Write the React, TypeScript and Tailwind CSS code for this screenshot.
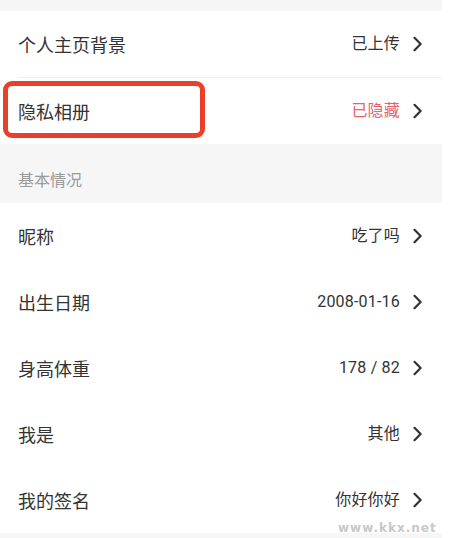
import React from "react";

const font = { fontFamily: '"Noto Sans CJK SC", "Noto Sans", sans-serif' };
const valueFont = { fontFamily: 'Roboto, "Noto Sans CJK SC", sans-serif' };

function Chevron() {
  return (
    <svg width="9" height="16" viewBox="0 0 9 16" className="shrink-0">
      <path d="M1.5 1.8 L7.6 8 L1.5 14.2" fill="none" stroke="#333" strokeWidth="2.2" strokeLinecap="round" strokeLinejoin="round" />
    </svg>
  );
}

function Row({ title, value, red, children }: { title: string; value: string; red?: boolean; children?: React.ReactNode }) {
  return (
    <div className="relative flex h-[66px] items-center justify-between bg-white pl-[18px] pr-[20px]">
      <span className="text-[18px] leading-none text-[#333]">{title}</span>
      <div className="flex items-center gap-[13px]">
        <span className={"text-[16px] leading-none tracking-[0.2px] " + (red ? "text-[#e8626a]" : "text-[#333]")} style={valueFont}>{value}</span>
        <Chevron />
      </div>
      {children}
    </div>
  );
}

export default function App() {
  return (
    <div className="relative h-[538px] w-[452px] overflow-hidden bg-white" style={font}>
      <div className="flex h-full w-[442px] flex-col bg-[#f6f6f6]">
        <div className="h-[11px] shrink-0" />
        <Row title="个人主页背景" value="已上传" />
        <div className="flex h-px bg-white pl-[18px]">
          <div className="h-px flex-1 bg-[#efefef]" />
        </div>
        <Row title="隐私相册" value="已隐藏" red>
          <div className="absolute left-[3px] top-[3px] h-[57px] w-[202px] rounded-[9px] border-[5px] border-[#e9402a]" />
        </Row>
        <div className="h-[59px] shrink-0 pl-[18px] pt-[27px] text-[16px] leading-none text-[#9a9a9a]">基本情况</div>
        <Row title="昵称" value="吃了吗" />
        <Row title="出生日期" value="2008-01-16" />
        <Row title="身高体重" value="178 / 82" />
        <Row title="我是" value="其他" />
        <Row title="我的签名" value="你好你好" />
      </div>
      <div className="absolute left-[338px] top-[522px] text-[12px] font-bold leading-none tracking-[1px] text-[#c8c8c8]" style={{ fontFamily: '"DejaVu Sans", sans-serif' }}>
        www.kkx.net
      </div>
    </div>
  );
}
